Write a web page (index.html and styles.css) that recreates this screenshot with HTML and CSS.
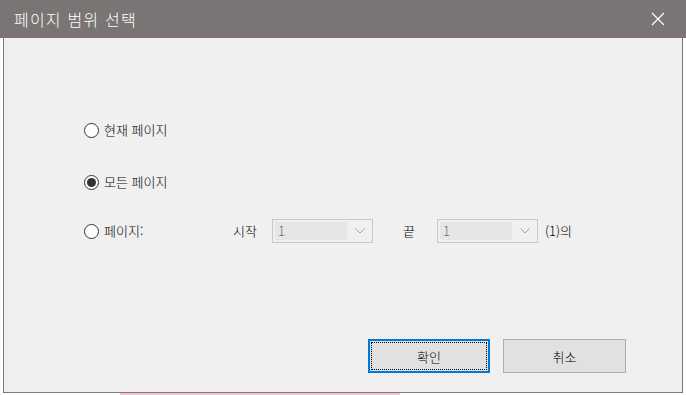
FILE: index.html
```html
<!DOCTYPE html>
<html lang="ko">
<head>
  <meta charset="UTF-8" />
  <title>페이지 범위 선택</title>
  <link rel="stylesheet" href="styles.css">
</head>
<body>
  <div class="titlebar">
    <span class="title">페이지 범위 선택</span>
    <svg class="close" width="14" height="14" viewBox="0 0 14 14">
      <path d="M1 1 L13 13 M13 1 L1 13" stroke="#fff" stroke-width="1.2" fill="none"/>
    </svg>
  </div>

  <div class="client">
    <div class="options">
      <label class="row">
        <span class="radio"></span>
        <span class="label">현재 페이지</span>
      </label>
      <label class="row second">
        <span class="radio checked"></span>
        <span class="label">모든 페이지</span>
      </label>
      <div class="row third">
        <span class="radio"></span>
        <span class="label pages">페이지:</span>
        <span class="small from">시작</span>
        <div class="combo">
          <span class="field">1</span>
          <svg class="chev" width="10" height="6" viewBox="0 0 10 6"><path d="M0.5 0.5 L5 5 L9.5 0.5" stroke="#a0a0a0" fill="none"/></svg>
        </div>
        <span class="small to">끝</span>
        <div class="combo">
          <span class="field">1</span>
          <svg class="chev" width="10" height="6" viewBox="0 0 10 6"><path d="M0.5 0.5 L5 5 L9.5 0.5" stroke="#a0a0a0" fill="none"/></svg>
        </div>
        <span class="small of">(1)의</span>
      </div>
    </div>

    <div class="buttons">
      <button class="btn default"><span class="focus">확인</span></button>
      <button class="btn">취소</button>
    </div>
  </div>

  <div class="under"><span class="pink"></span></div>
</body>
</html>
```

FILE: styles.css
```css
*{margin:0;padding:0;box-sizing:border-box}
body{
  font-family:"Noto Sans CJK KR","Noto Sans",sans-serif;
  font-size:13px;
  font-weight:300;
  color:#000;
  background:#fff;
  width:686px;
  height:395px;
  overflow:hidden;
}

.titlebar{height:38px;background:#7a7574;display:flex;align-items:center;justify-content:space-between;padding:0 21px 0 14px}
.title{color:#fff;font-size:16px;letter-spacing:1.2px}
.close{display:block}

.client{margin:0 3px 0 3px;height:355px;background:#f0f0f0;border:1px solid #7a7a7a;border-top:none;display:flex;flex-direction:column;padding:80px 56px 19px 80px}

.options{display:flex;flex-direction:column}
.row{display:flex;align-items:center;height:24px}
.row.second{margin-top:28px}
.row.third{margin-top:25px}

.radio{width:15px;height:15px;border:1px solid #333;border-radius:50%;background:#fff;display:flex;align-items:center;justify-content:center;margin-right:5px}
.radio.checked::after{content:"";width:9px;height:9px;border-radius:50%;background:#333}

.label{line-height:14px}
.label.pages{width:129px}
.small{line-height:14px}
.from{width:39px}
.to{margin:0 22px 0 30px}
.of{margin-left:7px}

.combo{width:101px;height:24px;border:1px solid #c8c8c8;background:#f0f0f0;display:flex;align-items:center;padding:2px;}
.field{flex:0 0 72px;height:18px;background:#e6e6e6;color:#6d6d6d;line-height:18px;padding-left:3px}
.chev{margin-left:8px}

.buttons{margin-top:auto;display:flex;justify-content:flex-end;gap:13px}
.btn{width:123px;height:34px;background:#e1e1e1;border:1px solid #adadad;font-family:inherit;font-weight:300;font-size:13px;color:#000;display:flex;align-items:center;justify-content:center}
.btn.default{width:122px;border:2px solid #0078d7;padding:1px}
.focus{display:flex;align-items:center;justify-content:center;width:100%;height:100%;border:1px dotted #000}

.under{height:2px;background:#fff;display:flex}
.pink{margin-left:120px;width:280px;background:#f2c2d4}
```
